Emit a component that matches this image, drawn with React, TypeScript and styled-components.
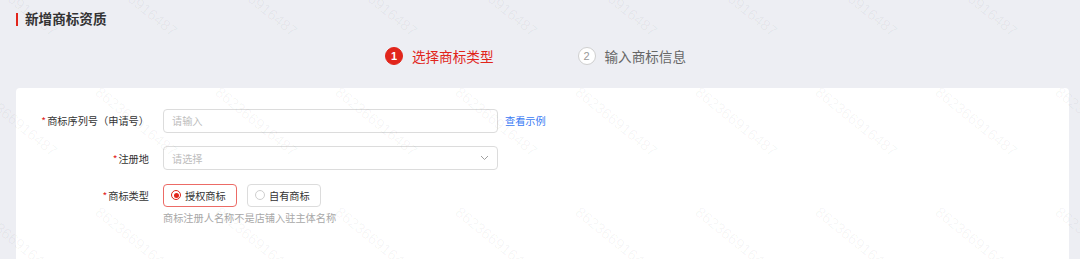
import React from "react";
import styled, { createGlobalStyle } from "styled-components";

const GlobalStyle = createGlobalStyle`
  html, body {
    margin: 0;
    padding: 0;
    background: #edeef3;
    font-family: "Noto Sans CJK SC", "Noto Sans", sans-serif;
  }
  * { box-sizing: border-box; }
`;

const Page = styled.div`
  position: relative;
  height: 259px;
  overflow: hidden;
  padding: 0 11px 0 16px;
  display: flex;
  flex-direction: column;
`;

const Header = styled.div`
  height: 38px;
  display: flex;
  align-items: center;
`;

const Title = styled.h1`
  margin: 0;
  display: flex;
  align-items: center;
  gap: 7px;
  font-size: 13.6px;
  font-weight: 700;
  color: #333;
  line-height: 1;
  &::before {
    content: "";
    width: 2px;
    height: 13px;
    background: #e1251b;
  }
`;

const Steps = styled.div`
  height: 50px;
  display: flex;
  justify-content: center;
  align-items: flex-start;
  padding: 9px 14px 0 0;
  gap: 84px;
`;

const Step = styled.div`
  display: flex;
  align-items: center;
  gap: 9px;
  height: 18px;
`;

const StepNum = styled.span<{ $active?: boolean }>`
  width: 18px;
  height: 18px;
  border-radius: 50%;
  display: flex;
  align-items: center;
  justify-content: center;
  font-size: 11px;
  font-family: "Liberation Sans", Arial, sans-serif;
  font-weight: ${(p) => (p.$active ? 700 : 400)};
  background: ${(p) => (p.$active ? "#e1251b" : "#fff")};
  color: ${(p) => (p.$active ? "#fff" : "#999")};
  border: 1px solid ${(p) => (p.$active ? "#e1251b" : "#cfcfcf")};
`;

const StepText = styled.span<{ $active?: boolean }>`
  font-size: 13.6px;
  color: ${(p) => (p.$active ? "#e1251b" : "#666")};
  line-height: 18px;
`;

const Card = styled.div`
  flex: 1;
  background: #fff;
  border-radius: 4px 4px 0 0;
  padding: 20.5px 0 0;
  display: flex;
  flex-direction: column;
  gap: 13.5px;
`;

const Row = styled.div`
  display: grid;
  grid-template-columns: 133px auto;
  column-gap: 14px;
  align-items: start;
`;

const Label = styled.label`
  height: 24px;
  display: flex;
  align-items: center;
  justify-content: flex-end;
  font-size: 10.2px;
  color: #333;
  white-space: nowrap;
  &::before {
    content: "*";
    color: #e1251b;
    margin-right: 1px;
  }
`;

const Field = styled.div`
  display: flex;
  flex-direction: column;
  gap: 4px;
`;

const Inline = styled.div`
  display: flex;
  align-items: center;
  gap: 7px;
`;

const InputBox = styled.div`
  width: 335px;
  height: 24px;
  border: 1px solid #dcdcdc;
  border-radius: 4px;
  display: flex;
  align-items: center;
  justify-content: space-between;
  padding: 0 8px 0 8px;
  font-size: 10.2px;
  color: #bdbdbd;
`;

const Link = styled.a`
  font-size: 10.2px;
  color: #3a7bf4;
  cursor: pointer;
`;

const RadioGroup = styled.div`
  display: flex;
  gap: 10px;
`;

const RadioButton = styled.div<{ $checked?: boolean }>`
  width: 74px;
  height: 23px;
  border-radius: 4px;
  border: 1px solid ${(p) => (p.$checked ? "#ec6b66" : "#dcdcdc")};
  display: flex;
  align-items: center;
  gap: 4px;
  padding-left: 7px;
  font-size: 10.2px;
  color: #333;
`;

const RadioDot = styled.span<{ $checked?: boolean }>`
  width: 10px;
  height: 10px;
  border-radius: 50%;
  border: 1px solid ${(p) => (p.$checked ? "#e1251b" : "#cfcfcf")};
  display: flex;
  align-items: center;
  justify-content: center;
  &::after {
    content: "";
    width: 5px;
    height: 5px;
    border-radius: 50%;
    background: ${(p) => (p.$checked ? "#e1251b" : "transparent")};
  }
`;

const Hint = styled.div`
  font-size: 10.2px;
  color: #a8a8a8;
  line-height: 14px;
`;

const WatermarkLayer = styled.div`
  position: absolute;
  inset: 0;
  pointer-events: none;
  overflow: hidden;
`;

const Mark = styled.span`
  position: absolute;
  font-family: "Liberation Sans", Arial, sans-serif;
  font-size: 15px;
  color: rgba(0, 0, 0, 0.045);
  transform: rotate(39deg);
  transform-origin: 0 0;
  white-space: nowrap;
`;

const Chevron = () => (
  <svg width="9" height="6" viewBox="0 0 9 6" fill="none">
    <path d="M1 1l3.5 3.5L8 1" stroke="#a0a0a0" strokeWidth="1" />
  </svg>
);

export default function App() {
  const marks: { x: number; y: number }[] = [];
  for (let r = 0; r < 4; r++) {
    for (let c = 0; c < 11; c++) {
      marks.push({ x: -17 + c * 120, y: -37 + r * 120 });
    }
  }
  return (
    <>
      <GlobalStyle />
      <Page>
        <Header>
          <Title>新增商标资质</Title>
        </Header>
        <Steps>
          <Step>
            <StepNum $active>1</StepNum>
            <StepText $active>选择商标类型</StepText>
          </Step>
          <Step>
            <StepNum>2</StepNum>
            <StepText>输入商标信息</StepText>
          </Step>
        </Steps>
        <Card>
          <Row>
            <Label>商标序列号（申请号）</Label>
            <Inline>
              <InputBox>请输入</InputBox>
              <Link>查看示例</Link>
            </Inline>
          </Row>
          <Row>
            <Label>注册地</Label>
            <InputBox>
              请选择
              <Chevron />
            </InputBox>
          </Row>
          <Row>
            <Label>商标类型</Label>
            <Field>
              <RadioGroup>
                <RadioButton $checked>
                  <RadioDot $checked />
                  授权商标
                </RadioButton>
                <RadioButton>
                  <RadioDot />
                  自有商标
                </RadioButton>
              </RadioGroup>
              <Hint>商标注册人名称不是店铺入驻主体名称</Hint>
            </Field>
          </Row>
        </Card>
        <WatermarkLayer>
          {marks.map((m, i) => (
            <Mark key={i} style={{ left: m.x, top: m.y }}>
              862366916487
            </Mark>
          ))}
        </WatermarkLayer>
      </Page>
    </>
  );
}
